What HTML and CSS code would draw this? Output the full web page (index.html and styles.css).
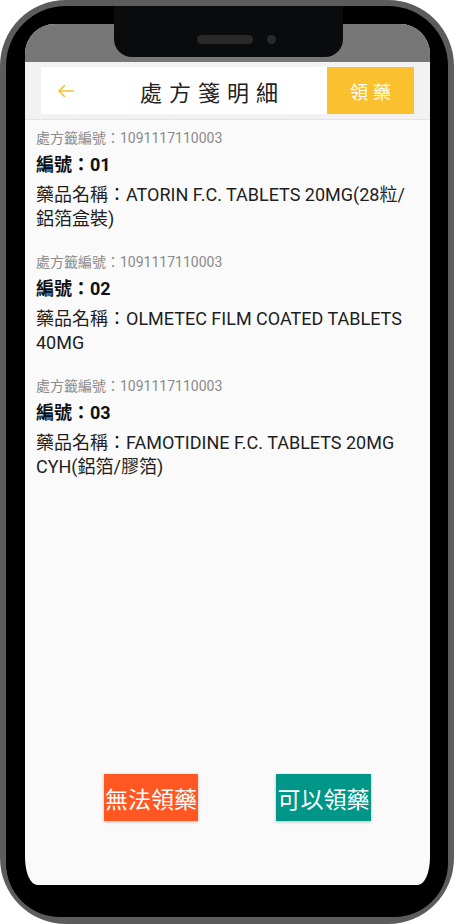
FILE: index.html
```html
<!DOCTYPE html>
<html lang="zh-Hant">
<head>
    <meta charset="UTF-8">
    <meta name="viewport" content="width=device-width, initial-scale=1.0">
    <title>處方箋明細</title>
    <link rel="stylesheet" href="styles.css">
</head>
<body>
    <div class="phone">
        <div class="bezel">
            <div class="notch">
                <span class="speaker"></span>
                <span class="camera"></span>
            </div>
            <div class="screen">
                <div class="status-bar"></div>

                <div class="header">
                    <div class="header-main">
                        <button class="back" aria-label="返回">
                            <svg width="18" height="14" viewBox="0 0 18 14">
                                <path d="M16.5 7H2M7.5 1.5L2 7l5.5 5.5" fill="none" stroke="#fbc02d" stroke-width="1.6" stroke-linecap="round" stroke-linejoin="round"/>
                            </svg>
                        </button>
                        <h1 class="title">處方箋明細</h1>
                    </div>
                    <button class="take-btn">領藥</button>
                </div>

                <div class="list">
                    <div class="item">
                        <div class="rx-no">處方籤編號：1091117110003</div>
                        <div class="seq">編號：01</div>
                        <div class="drug">藥品名稱：ATORIN F.C. TABLETS 20MG(28粒/鋁箔盒裝)</div>
                    </div>
                    <div class="item">
                        <div class="rx-no">處方籤編號：1091117110003</div>
                        <div class="seq">編號：02</div>
                        <div class="drug">藥品名稱：OLMETEC FILM COATED TABLETS 40MG</div>
                    </div>
                    <div class="item">
                        <div class="rx-no">處方籤編號：1091117110003</div>
                        <div class="seq">編號：03</div>
                        <div class="drug">藥品名稱：FAMOTIDINE F.C. TABLETS 20MG CYH(鋁箔/膠箔)</div>
                    </div>
                </div>

                <div class="actions">
                    <button class="action reject">無法領藥</button>
                    <button class="action accept">可以領藥</button>
                </div>
            </div>
        </div>
    </div>
</body>
</html>
```

FILE: styles.css
```css
* {
    box-sizing: border-box;
    margin: 0;
    padding: 0;
    font-family: Roboto, "Noto Sans CJK TC", sans-serif;
}

body {
    background-color: #fff;
}

.phone {
    width: 454px;
    height: 924px;
    background-color: #5c5c5c;
    border-radius: 66px;
    padding: 6px 6px 7px 6px;
}

.bezel {
    position: relative;
    height: 100%;
    background-color: #000;
    border-radius: 60px 60px 54px 54px;
    padding: 18px 18px 32px 19px;
}

.notch {
    position: absolute;
    top: 0;
    left: 108px;
    width: 229px;
    height: 51px;
    background-color: #0a0b0d;
    border-radius: 0 0 18px 18px;
    z-index: 2;
}

.speaker {
    position: absolute;
    left: 83px;
    top: 29px;
    width: 56px;
    height: 9px;
    border-radius: 5px;
    background-color: #2a2a2a;
}

.camera {
    position: absolute;
    left: 153px;
    top: 29px;
    width: 9px;
    height: 9px;
    border-radius: 50%;
    background-color: #2a2a2a;
}

.screen {
    height: 100%;
    display: flex;
    flex-direction: column;
    background-color: #fafafa;
    border-radius: 30px 30px 12px 12px / 30px 30px 28px 28px;
    overflow: hidden;
}

.status-bar {
    height: 38px;
    background-color: #777;
    flex-shrink: 0;
}

.header {
    display: flex;
    padding: 5px 16px;
    background-color: #f2f2f2;
    border-bottom: 1px solid #e4e4e4;
    flex-shrink: 0;
}

.header-main {
    flex: 1;
    display: flex;
    align-items: center;
    height: 47px;
    background-color: #fff;
}

.back {
    width: 50px;
    height: 47px;
    display: flex;
    align-items: center;
    padding-left: 16px;
    background: none;
    border: none;
}

.title {
    flex: 1;
    text-align: center;
    font-size: 22px;
    font-weight: 400;
    color: #222;
    letter-spacing: 7px;
    padding-left: 7px;
}

.take-btn {
    width: 87px;
    height: 47px;
    background-color: #fbc02d;
    color: #fff;
    border: none;
    font-size: 18px;
    letter-spacing: 5px;
    padding-left: 5px;
}

.list {
    flex: 1;
    padding: 8px 11px 0;
}

.item {
    margin-bottom: 21px;
}

.rx-no {
    font-size: 14px;
    line-height: 20px;
    color: #8a8a8a;
}

.seq {
    margin-top: 5px;
    font-size: 18px;
    line-height: 24px;
    font-weight: bold;
    color: #111;
}

.drug {
    margin-top: 6px;
    font-size: 18px;
    line-height: 24px;
    color: #1e1e1e;
}

.actions {
    display: flex;
    gap: 78px;
    padding: 0 0 64px 79px;
    flex-shrink: 0;
}

.action {
    width: 94px;
    height: 47px;
    border: none;
    color: #fff;
    font-size: 23px;
    white-space: nowrap;
    box-shadow: 0 1px 3px rgba(0,0,0,0.25);
}

.reject {
    background-color: #ff5722;
}

.accept {
    width: 95px;
    background-color: #009688;
}
```
